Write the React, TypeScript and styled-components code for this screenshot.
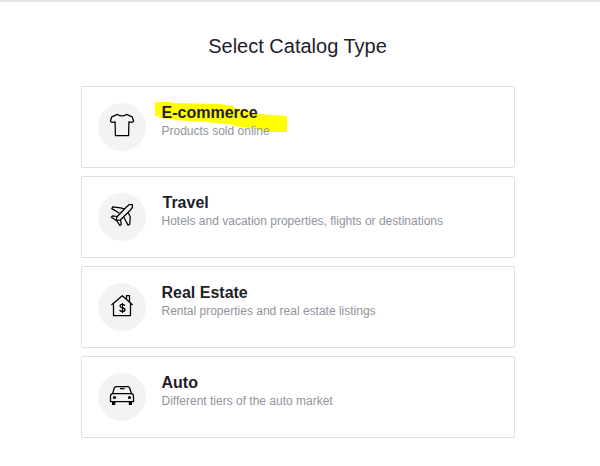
import React from "react";
import styled, { createGlobalStyle } from "styled-components";

const Global = createGlobalStyle`
  * { box-sizing: border-box; }
  body { margin: 0; background: #fff; font-family: "Liberation Sans", Arial, sans-serif; }
`;
const Page = styled.main`
  height: 466px;
  overflow: hidden;
  border-top: 2px solid #e3e3e8;
  display: flex;
  flex-direction: column;
  align-items: center;
`;
const Title = styled.h1`
  margin: 31px 0 27px;
  padding-right: 5px;
  font-weight: 400;
  font-size: 20px;
  line-height: 26px;
  color: #1d2129;
`;
const List = styled.div`
  display: grid;
  gap: 8px;
  width: 434px;
  margin-right: 4px;
`;
const Card = styled.button`
  height: 82px;
  border: 1px solid #dddfe2;
  border-radius: 2px;
  background: #fff;
  padding: 16px;
  display: flex;
  gap: 15.5px;
  text-align: left;
  font-family: inherit;
`;
const Disc = styled.span`
  width: 48px;
  height: 48px;
  border-radius: 50%;
  background: #f2f4f4;
  flex: none;
`;
const Icon = styled.svg`
  display: block;
  width: 48px;
  height: 48px;
  fill: none;
  stroke: #000;
  stroke-width: 1.25;
  stroke-linejoin: round;
`;
const Copy = styled.div`
  position: relative;
  isolation: isolate;
  padding-top: 1px;
`;
const Marker = styled.svg`
  position: absolute;
  z-index: -1;
  left: -6.5px;
  top: -3px;
  width: 133px;
  height: 34px;
`;
const Name = styled.div<{ $nudge?: boolean }>`
  font-weight: 700;
  font-size: 16px;
  line-height: 18px;
  color: #1d2129;
  padding-left: ${(p) => (p.$nudge ? 1 : 0)}px;
`;
const Note = styled.div`
  font-size: 12px;
  line-height: 18px;
  color: #90949c;
`;

const Shirt = () => (
  <Icon viewBox="0 0 48 48">
    <path d="M19.5 11.4Q24 14.4 28.5 11.4L34.2 13.8L35.6 18.2L33.8 19.4L30.9 18.8L30.6 32.5H17.4L17.1 18.8L14.2 19.4L12.4 18.2L13.8 13.8Z" />
  </Icon>
);
const Plane = () => (
  <Icon viewBox="0 0 48 48">
    <path d="M34.4 11.5V14.5L31.8 17.7L22 27.2L18.5 27.5L18.8 24L28.2 14.2L31.3 11.5Z" />
    <path d="M26.3 15.8L22.5 14.8L14.8 13.8L13.8 15.6L21.5 20.2M30.2 19.7L32.3 24L31.7 31.5L30 32.1L25.8 24.3M19 23.5L14.6 22.8L13.4 24.2L18.5 27.5M22.5 26.8L23.3 31.4L22 32.6L18.5 27.5" />
  </Icon>
);
const House = () => (
  <Icon viewBox="0 0 48 48">
    <path d="M13.4 22L24.3 12.7L34.7 22M15.5 20.5V32.5H32.5V20.5M28.5 16.5V12.5H31.5V19" />
    <path d="M26.8 22.8Q26.5 21.4 24.4 21.4Q22 21.4 22 23.1Q22 24.5 24.4 24.8Q27 25.2 27 26.7Q27 28.4 24.4 28.4Q22 28.4 21.8 26.8M24.5 20V30" />
  </Icon>
);
const Car = () => (
  <Icon viewBox="0 0 48 48">
    <path d="M14.6 20.5L16.4 14.7Q16.8 13.5 18 13.5H30Q31.2 13.5 31.6 14.7L33.4 20.5M15 20.5H33Q35.5 20.5 35.5 23V28.5H12.5V23Q12.5 20.5 15 20.5ZM22 15.5H26.5" />
    <g fill="#000" stroke="none">
      <circle cx="16.5" cy="24.5" r="1.6" />
      <circle cx="31.5" cy="24.5" r="1.6" />
      <path d="M14 28H17.3V32H14ZM30.8 28H34V32H30.8Z" />
    </g>
  </Icon>
);

const items = [
  { name: "E-commerce", note: "Products sold online", Glyph: Shirt, marked: true },
  { name: "Travel", note: "Hotels and vacation properties, flights or destinations", Glyph: Plane, nudge: true },
  { name: "Real Estate", note: "Rental properties and real estate listings", Glyph: House },
  { name: "Auto", note: "Different tiers of the auto market", Glyph: Car },
];

export default function App() {
  return (
    <>
      <Global />
      <Page>
        <Title>Select Catalog Type</Title>
        <List>
          {items.map(({ name, note, Glyph, marked, nudge }) => (
            <Card key={name}>
              <Disc><Glyph /></Disc>
              <Copy>
                {marked && (
                  <Marker viewBox="0 0 133 34">
                    <path fill="#ff0" d="M0 2H17V3L64 4L79 6V8L96 11V13L115 15L132 16V32H118L104 30V29L79 26V25L52 22L20 20V19L4 18V16H0Z" />
                  </Marker>
                )}
                <Name $nudge={nudge}>{name}</Name>
                <Note>{note}</Note>
              </Copy>
            </Card>
          ))}
        </List>
      </Page>
    </>
  );
}
